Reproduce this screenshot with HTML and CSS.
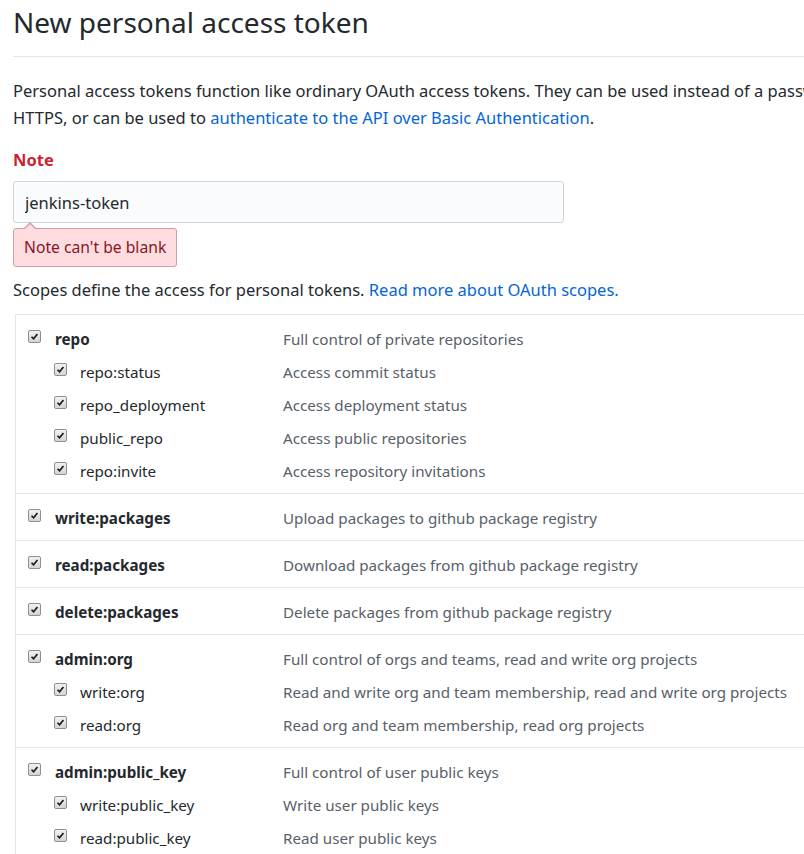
FILE: index.html
```html
<!DOCTYPE html>
<html>
<head>
<meta charset="utf-8">
<link rel="stylesheet" href="styles.css">
</head>
<body>
<div class="page">
  <h2 class="subhead">New personal access token</h2>
  <p class="intro">Personal access tokens function like ordinary OAuth access tokens. They can be used instead of a password for Git over<br>HTTPS, or can be used to <a href="#">authenticate to the API over Basic Authentication</a>.</p>

  <div class="form-group">
    <label class="note-label">Note</label>
    <input class="note-input" type="text" value="jenkins-token">
    <div class="error">Note can't be blank</div>
  </div>

  <p class="scopes-intro">Scopes define the access for personal tokens. <a href="#">Read more about OAuth scopes.</a></p>

  <div class="scopes">
    <div class="group">
      <div class="row parent"><span class="cb"><svg viewBox="0 0 13 13"><path d="M3 6.8 L5.4 9.2 L10 3.6"/></svg></span><span class="name">repo</span><span class="desc">Full control of private repositories</span></div>
      <div class="row child"><span class="cb"><svg viewBox="0 0 13 13"><path d="M3 6.8 L5.4 9.2 L10 3.6"/></svg></span><span class="name">repo:status</span><span class="desc">Access commit status</span></div>
      <div class="row child"><span class="cb"><svg viewBox="0 0 13 13"><path d="M3 6.8 L5.4 9.2 L10 3.6"/></svg></span><span class="name">repo_deployment</span><span class="desc">Access deployment status</span></div>
      <div class="row child"><span class="cb"><svg viewBox="0 0 13 13"><path d="M3 6.8 L5.4 9.2 L10 3.6"/></svg></span><span class="name">public_repo</span><span class="desc">Access public repositories</span></div>
      <div class="row child"><span class="cb"><svg viewBox="0 0 13 13"><path d="M3 6.8 L5.4 9.2 L10 3.6"/></svg></span><span class="name">repo:invite</span><span class="desc">Access repository invitations</span></div>
    </div>
    <div class="group">
      <div class="row parent"><span class="cb"><svg viewBox="0 0 13 13"><path d="M3 6.8 L5.4 9.2 L10 3.6"/></svg></span><span class="name">write:packages</span><span class="desc">Upload packages to github package registry</span></div>
    </div>
    <div class="group">
      <div class="row parent"><span class="cb"><svg viewBox="0 0 13 13"><path d="M3 6.8 L5.4 9.2 L10 3.6"/></svg></span><span class="name">read:packages</span><span class="desc">Download packages from github package registry</span></div>
    </div>
    <div class="group">
      <div class="row parent"><span class="cb"><svg viewBox="0 0 13 13"><path d="M3 6.8 L5.4 9.2 L10 3.6"/></svg></span><span class="name">delete:packages</span><span class="desc">Delete packages from github package registry</span></div>
    </div>
    <div class="group">
      <div class="row parent"><span class="cb"><svg viewBox="0 0 13 13"><path d="M3 6.8 L5.4 9.2 L10 3.6"/></svg></span><span class="name">admin:org</span><span class="desc">Full control of orgs and teams, read and write org projects</span></div>
      <div class="row child"><span class="cb"><svg viewBox="0 0 13 13"><path d="M3 6.8 L5.4 9.2 L10 3.6"/></svg></span><span class="name">write:org</span><span class="desc">Read and write org and team membership, read and write org projects</span></div>
      <div class="row child"><span class="cb"><svg viewBox="0 0 13 13"><path d="M3 6.8 L5.4 9.2 L10 3.6"/></svg></span><span class="name">read:org</span><span class="desc">Read org and team membership, read org projects</span></div>
    </div>
    <div class="group">
      <div class="row parent"><span class="cb"><svg viewBox="0 0 13 13"><path d="M3 6.8 L5.4 9.2 L10 3.6"/></svg></span><span class="name">admin:public_key</span><span class="desc">Full control of user public keys</span></div>
      <div class="row child"><span class="cb"><svg viewBox="0 0 13 13"><path d="M3 6.8 L5.4 9.2 L10 3.6"/></svg></span><span class="name">write:public_key</span><span class="desc">Write user public keys</span></div>
      <div class="row child"><span class="cb"><svg viewBox="0 0 13 13"><path d="M3 6.8 L5.4 9.2 L10 3.6"/></svg></span><span class="name">read:public_key</span><span class="desc">Read user public keys</span></div>
    </div>
  </div>
</div>
</body>
</html>
```

FILE: styles.css
```css
html, body {
  margin: 0;
  overflow: hidden;
  background: #fff;
}
body {
  font-family: "Noto Sans", "Open Sans", sans-serif;
  font-size: 16.5px;
  color: #24292e;
}
.page {
  width: 1000px;
  padding-left: 13px;
}
a {
  color: #0366d6;
  text-decoration: none;
}
.subhead {
  margin: 0;
  padding: 2px 0 14px 0;
  font-size: 28px;
  font-weight: 400;
  line-height: 40px;
  border-bottom: 1px solid #e1e4e8;
}
.intro {
  margin: 20px 0 0 0;
  line-height: 27px;
  white-space: nowrap;
}
.form-group {
  margin-top: 17px;
}
.note-label {
  display: block;
  font-weight: 700;
  color: #cb2431;
  line-height: 24px;
}
.note-input {
  display: block;
  box-sizing: border-box;
  margin-top: 9px;
  width: 551px;
  height: 42px;
  padding: 0 11px;
  font-family: inherit;
  font-size: 16.5px;
  color: #24292e;
  background: #fafbfc;
  border: 1px solid #d1d5da;
  border-radius: 3px;
  outline: none;
}
.error {
  position: relative;
  display: inline-block;
  margin-top: 5px;
  padding: 7px 10px 8px 10px;
  font-size: 15.7px;
  line-height: 22px;
  color: #86181d;
  background: #ffdce0;
  border: 1px solid #cea0a5;
  border-radius: 3px;
}
.error::before,
.error::after {
  content: "";
  position: absolute;
  left: 10px;
  border: 6px solid transparent;
}
.error::before {
  top: -13px;
  border-bottom-color: #cea0a5;
}
.error::after {
  top: -11px;
  border-bottom-color: #ffdce0;
}
.scopes-intro {
  margin: 10px 0 0 0;
  line-height: 26px;
}
.scopes {
  margin: 11px 0 0 2px;
  border-top: 1px solid #e1e4e8;
  border-left: 1px solid #e1e4e8;
  font-size: 15.2px;
}
.group {
  padding: 7px 0 6px 0;
  border-bottom: 1px solid #e1e4e8;
}
.row {
  display: flex;
  align-items: center;
  height: 33px;
  padding-left: 12px;
}
.row.child {
  padding-left: 38px;
}
.cb {
  box-sizing: border-box;
  width: 13px;
  height: 13px;
  margin-right: 14px;
  margin-bottom: 5px;
  border: 1px solid #8e8f8f;
  border-radius: 2px;
  background: linear-gradient(#f2f2f2, #d4d4d4);
  flex: none;
}
.row.child .cb {
  margin-right: 13px;
}
.cb svg {
  display: block;
  width: 11px;
  height: 11px;
  fill: none;
  stroke: #1b1b1b;
  stroke-width: 2;
}
.name {
  width: 228px;
  flex: none;
}
.row.child .name {
  width: 203px;
}
.parent .name {
  font-weight: 700;
}
.desc {
  color: #586069;
}
```
